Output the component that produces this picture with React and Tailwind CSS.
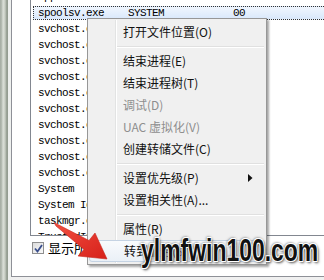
import React from "react";

const rows = [
  { n: "sppsvc.exe", u: "NETWORK ...", c: "00" },
  { n: "spoolsv.exe", u: "SYSTEM", c: "00", sel: true },
  { n: "svchost.exe", u: "SYSTEM", c: "00" },
  { n: "svchost.exe", u: "LOCAL ...", c: "00" },
  { n: "svchost.exe", u: "SYSTEM", c: "00" },
  { n: "svchost.exe", u: "NETWORK ...", c: "00" },
  { n: "svchost.exe", u: "SYSTEM", c: "00" },
  { n: "svchost.exe", u: "LOCAL ...", c: "00" },
  { n: "svchost.exe", u: "SYSTEM", c: "00" },
  { n: "svchost.exe", u: "LOCAL ...", c: "00" },
  { n: "svchost.exe", u: "NETWORK ...", c: "00" },
  { n: "svchost.exe", u: "SYSTEM", c: "00" },
  { n: "System", u: "SYSTEM", c: "00" },
  { n: "System Idle Process", u: "SYSTEM", c: "99" },
  { n: "taskmgr.exe", u: "Admin", c: "01" },
  { n: "TrustedInstaller.exe", u: "SYSTEM", c: "00" },
];

function Item({ label, disabled, sub, hover }) {
  return (
    <div
      className={
        "relative h-[22px] mx-[1px] flex items-center pl-[34px] pr-[10px] text-[12px] leading-[22px] " +
        (disabled ? "text-[#8e8e8e] " : "text-[#111] ") +
        (hover
          ? "rounded-[3px] border border-[#c5d3e3] bg-[linear-gradient(#f9fbfd,#eaf0f7)] pl-[33px]"
          : "")
      }
    >
      <span className="flex-1 whitespace-nowrap">{label}</span>
      {sub && (
        <svg width="5" height="8" viewBox="0 0 5 8" className="mr-[2px]">
          <path d="M0 0 L4.5 4 L0 8 Z" fill="#111" />
        </svg>
      )}
    </div>
  );
}

function Sep() {
  return (
    <div className="h-[7px] flex flex-col justify-center pl-[29px] pr-[2px]">
      <div className="h-[1px] bg-[#e0e0e0]" />
      <div className="h-[1px] bg-white" />
    </div>
  );
}

export default function App() {
  return (
    <div
      className="relative w-[324px] h-[280px] overflow-hidden flex bg-[#f0f0f0]"
      style={{ fontFamily: "'Noto Sans CJK SC', 'Liberation Sans', sans-serif" }}
    >
      {/* window frame */}
      <div className="w-[8px] h-full bg-[linear-gradient(to_right,#a3aaa1_0px,#b9c0b6_2px,#dde1da_3px,#c7cdc3_5px,#8e978b_7px,#9aa297_8px)]" />
      <div className="w-[3px] h-full bg-[#eef0ee]" />
      <div className="flex-1 flex flex-col">
        <div className="h-[277px] bg-white border-l border-b border-[#8e9097] flex flex-col pl-[18px]">
          {/* list box */}
          <div className="h-[236px] border-l border-b border-[#828790] overflow-hidden">
            <div className="-mt-[11px] ml-[2px] flex flex-col" style={{ fontFamily: "'Liberation Mono', monospace" }}>
              {rows.map((r, i) => (
                <div key={i} className="h-[16px] flex flex-col justify-center">
                  <div
                    className={
                      "h-[14px] flex items-center pl-[4px] text-[11px] tracking-[-0.6px] text-black whitespace-nowrap " +
                      (r.sel
                        ? "border border-r-0 border-dotted border-[#333] bg-[linear-gradient(#f0f6fe,#d9e8fb)]"
                        : "border border-transparent")
                    }
                  >
                    <span className="w-[90px] overflow-hidden">{r.n}</span>
                    <span className="w-[105px] overflow-hidden">{r.u}</span>
                    <span className="w-[40px]">{r.c}</span>
                  </div>
                </div>
              ))}
            </div>
          </div>
          {/* checkbox row */}
          <div className="mt-[5px] flex items-center h-[14px]">
            <div className="ml-[2px] w-[12px] h-[12px] border border-[#8f8f8f] bg-[linear-gradient(135deg,#dcdcdc,#fafafa)] flex items-center justify-center">
              <svg width="9" height="9" viewBox="0 0 9 9">
                <path d="M1 4.5 L3.5 7.5 L8 1" stroke="#3a4f8c" strokeWidth="1.8" fill="none" />
              </svg>
            </div>
            <span className="ml-[4px] text-[13px] leading-[14px] text-black whitespace-nowrap">显示所有用户的进程(S)</span>
          </div>
        </div>
      </div>

      {/* context menu */}
      <div className="absolute left-[87px] top-[18px] w-[180px] h-[247px] border border-[#979797] bg-[#f0f0f0] shadow-[2px_2px_2px_rgba(0,0,0,0.35)] py-[2px]">
        <div className="absolute left-[27px] top-[1px] bottom-[1px] w-[2px] flex">
          <div className="w-[1px] bg-[#e2e3e3]" />
          <div className="w-[1px] bg-white" />
        </div>
        <div className="relative flex flex-col">
          <Item label="打开文件位置(O)" />
          <Sep />
          <Item label="结束进程(E)" />
          <Item label="结束进程树(T)" />
          <Item label="调试(D)" disabled />
          <Item label="UAC 虚拟化(V)" disabled />
          <Item label="创建转储文件(C)" />
          <Sep />
          <Item label="设置优先级(P)" sub />
          <Item label="设置相关性(A)..." />
          <Sep />
          <Item label="属性(R)" />
          <Item label="转到服务(S)" hover />
        </div>
      </div>

      {/* red arrow */}
      <svg className="absolute left-0 top-0" width="324" height="280" viewBox="0 0 324 280">
        <defs>
          <linearGradient id="ar" x1="0" y1="0" x2="1" y2="1">
            <stop offset="0" stopColor="#f25040" />
            <stop offset="1" stopColor="#d6201a" />
          </linearGradient>
        </defs>
        <path
          d="M54 222.5 L56 226 L84 249.5 L78 256 L107 259 L95 233 L89 240.5 Z"
          fill="url(#ar)"
          stroke="#c8261c"
          strokeWidth="0.6"
        />
      </svg>

      {/* watermark */}
      <div
        className="absolute left-[141px] top-[235px] origin-left scale-x-74 text-[31px] font-bold leading-none text-[#111] whitespace-nowrap [text-shadow:1px_1px_0_#fff,-1px_-1px_0_#fff,1px_-1px_0_#fff,-1px_1px_0_#fff,0_0_3px_#444,2px_2px_3px_#555,-1px_-1px_3px_#777]"
        style={{ fontFamily: "'Liberation Sans', Arial, sans-serif" }}
      >
        ylmfwin100.com
      </div>
    </div>
  );
}
